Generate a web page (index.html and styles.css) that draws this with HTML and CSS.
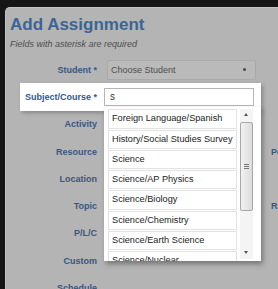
FILE: index.html
```html
<!DOCTYPE html>
<html>
<head>
    <meta charset="UTF-8">
    <title>Add Assignment</title>

    <link rel="stylesheet" href="styles.css">

</head>

<body>

<div class="screen">
<div class="modal">

    <h1 class="title">Add Assignment</h1>
    <p class="note">Fields with asterisk are required</p>

    <div class="form">

        <div class="row">
            <label class="lbl">Student *</label>
            <div class="select">Choose Student<span class="caret"></span></div>
        </div>

        <div class="row row-focus">
            <label class="lbl lbl-focus">Subject/Course *</label>
            <div class="input">s</div>

            <div class="suggest">
                <ul class="suggest-list">
                    <li>Foreign Language/Spanish</li>
                    <li>History/Social Studies Survey</li>
                    <li>Science</li>
                    <li>Science/AP Physics</li>
                    <li>Science/Biology</li>
                    <li>Science/Chemistry</li>
                    <li>Science/Earth Science</li>
                    <li>Science/Nuclear</li>
                </ul>
                <div class="scroll">
                    <span class="arrow-up"></span>
                    <span class="thumb"><span class="grip"></span></span>
                    <span class="arrow-down"></span>
                </div>
            </div>
        </div>

        <div class="row"><label class="lbl">Activity</label></div>
        <div class="row"><label class="lbl">Resource</label><label class="lbl-side">Period</label></div>
        <div class="row"><label class="lbl">Location</label></div>
        <div class="row"><label class="lbl">Topic</label><label class="lbl-side">Room</label></div>
        <div class="row"><label class="lbl">P/L/C</label></div>
        <div class="row"><label class="lbl">Custom</label></div>
        <div class="row"><label class="lbl">Schedule</label></div>

    </div>

</div>
</div>

</body>
</html>
```

FILE: styles.css
```css
body {
    margin: 0;
    background: #161616;
    font-family: "Liberation Sans", Arial, sans-serif;
    overflow: hidden;
}

.screen {
    height: 282px;
    padding: 7px 0 0 5px;
    overflow: hidden;
}

.modal {
    width: 420px;
    height: 320px;
    background: #b4b4b4;
    border-top: 1px solid #c4c4c4;
    border-left: 1px solid #c4c4c4;
    border-radius: 5px 0 0 0;
    padding: 7px 0 0 4px;
}

.title {
    margin: 0;
    font-size: 17px;
    line-height: 20px;
    font-weight: bold;
    color: #3b6594;
}

.note {
    margin: 4px 0 0 0;
    font-size: 9px;
    line-height: 10px;
    font-style: italic;
    color: #4d4d4d;
}

.form {
    margin-top: 7px;
}

.row {
    display: flex;
    align-items: center;
    height: 27.3px;
}

.lbl {
    width: 87px;
    flex-shrink: 0;
    text-align: right;
    font-size: 9px;
    font-weight: bold;
    color: #38577e;
}

.lbl-side {
    margin-left: 174px;
    font-size: 9px;
    font-weight: bold;
    color: #38577e;
    white-space: nowrap;
}

.select {
    position: relative;
    box-sizing: border-box;
    width: 149px;
    height: 20px;
    margin-left: 10px;
    padding-left: 3px;
    line-height: 18px;
    font-size: 9px;
    color: #4e4e4e;
    background: #bababa;
    border: 1px solid #a9a9a9;
    border-radius: 2px;
}

.caret {
    position: absolute;
    right: 9px;
    top: 7px;
    width: 3px;
    height: 3px;
    border-radius: 50%;
    background: #4a4a4a;
}

/* the field with focus sits above the dimmed modal */
.row-focus {
    position: relative;
    box-sizing: border-box;
    width: 241px;
    margin-left: 10px;
    background: #fff;
    box-shadow: 2px 2px 4px rgba(0, 0, 0, 0.25);
}

.lbl-focus {
    width: 77px;
    color: #2b5a97;
}

.input {
    box-sizing: border-box;
    width: 150px;
    height: 18px;
    margin-left: 7px;
    padding-left: 5px;
    line-height: 16px;
    font-size: 10px;
    color: #333;
    border: 1px solid #b5b5b5;
}

.suggest {
    position: absolute;
    left: 84px;
    top: 24px;
    box-sizing: border-box;
    width: 157px;
    height: 154px;
    padding: 2px 0 0 4px;
    background: #fff;
    box-shadow: 2px 3px 5px rgba(0, 0, 0, 0.35);
    overflow: hidden;
}

.suggest-list {
    margin: 0;
    padding: 0;
    list-style: none;
    width: 129px;
}

.suggest-list li {
    box-sizing: border-box;
    height: 19.3px;
    margin-bottom: 1px;
    padding-left: 3px;
    line-height: 17.3px;
    font-size: 9.2px;
    color: #222;
    border: 1px solid #e2e2e2;
    white-space: nowrap;
}

.scroll {
    position: absolute;
    right: 8px;
    top: 2px;
    bottom: 2px;
    width: 13px;
    background: #f4f4f4;
}

.arrow-up,
.arrow-down {
    position: absolute;
    left: 4px;
    width: 0;
    height: 0;
    border-left: 2.5px solid transparent;
    border-right: 2.5px solid transparent;
}

.arrow-up {
    top: 4px;
    border-bottom: 3px solid #555;
}

.arrow-down {
    bottom: 5px;
    border-top: 3px solid #555;
}

.thumb {
    position: absolute;
    left: 0;
    top: 13px;
    box-sizing: border-box;
    width: 13px;
    height: 89px;
    border: 1px solid #a8a8a8;
    border-radius: 2px;
    background: linear-gradient(to right, #f2f2f2, #dcdcdc);
}

.grip {
    position: absolute;
    left: 3px;
    top: 41px;
    width: 5px;
    height: 5px;
    background: repeating-linear-gradient(to bottom, #777 0, #777 1px, transparent 1px, transparent 2px);
}
```
